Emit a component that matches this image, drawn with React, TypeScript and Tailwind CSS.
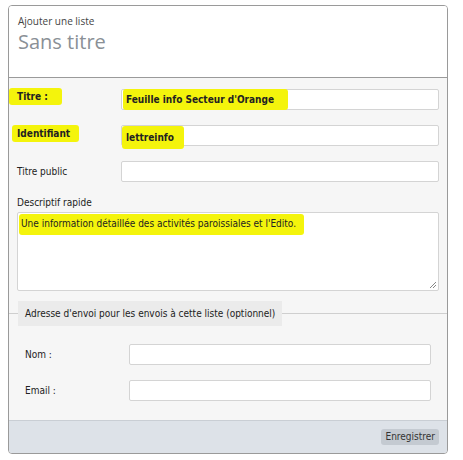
import React from 'react';

const Mark = ({ children, className = '' }: { children: React.ReactNode; className?: string }) => (
  <span className={`bg-[#f4f40c] rounded-[3px] ${className}`}>{children}</span>
);

function Row({ label, value, bold }: { label: React.ReactNode; value?: React.ReactNode; bold?: boolean }) {
  return (
    <div className="flex items-center h-[21px] mb-[15px]">
      <div className={`w-[104px] shrink-0 ${bold ? 'font-bold' : ''}`}>{label}</div>
      <div className="flex-1 h-[21px] bg-white border border-[#d4d4d4] rounded-[2px] flex items-center pl-[3px]">
        {value}
      </div>
    </div>
  );
}

export default function App() {
  return (
    <div className="w-[463px] h-[460px] bg-white pt-[5px] pl-[8px]" style={{ fontFamily: '"DejaVu Sans Condensed", "DejaVu Sans", sans-serif' }}>
      <div className="w-[440px] border border-[#9a9a9a] rounded-[4px] overflow-hidden text-[10px] text-[#222]">
        <div className="h-[72px] bg-white border-b border-[#9a9a9a] pl-[9px] pt-[8px]" style={{ fontFamily: '"Open Sans", sans-serif' }}>
          <div className="text-[10px] text-[#444] leading-[14px]">Ajouter une liste</div>
          <div className="text-[20px] text-[#8a9096] leading-[28px]">Sans titre</div>
        </div>
        <div className="bg-[#f6f6f6] px-[8px] pt-[11px]">
          <Row
            bold
            label={<Mark className="-ml-[8px] pl-[8px] pr-[14px] py-[3px] relative -top-[3px]">Titre :</Mark>}
            value={<Mark className="font-bold -ml-[2px] pl-[3px] pr-[14px] py-[3px]">Feuille info Secteur d'Orange</Mark>}
          />
          <Row
            bold
            label={<Mark className="-ml-[5px] pl-[5px] pr-[9px] py-[3px] relative -top-[2px]">Identifiant</Mark>}
            value={<Mark className="font-bold -ml-[3px] pl-[4px] pr-[10px] py-[4px] relative top-[2px]">lettreinfo</Mark>}
          />
          <Row label="Titre public" />
          <div className="leading-[12px] mt-[2px] mb-[3px]">Descriptif rapide</div>
          <div className="relative h-[79px] bg-white border border-[#d4d4d4] rounded-[2px] pt-[3px] pl-[1px]">
            <Mark className="pl-[2px] pr-[8px] pt-[4px] pb-[6px]">Une information détaillée des activités paroissiales et l'Edito.</Mark>
            <svg className="absolute right-[1px] bottom-[1px]" width="9" height="9" viewBox="0 0 9 9">
              <path d="M8 2 L2 8 M8 5 L5 8" stroke="#888" strokeWidth="1" />
            </svg>
          </div>
          <fieldset className="-mx-[8px] mt-[10px] border-t border-[#cfcfcf] px-[16px] pb-[19px]">
            <legend className="-ml-[7px] bg-[#ebebeb] px-[7px] h-[25px] leading-[25px]">
              Adresse d'envoi pour les envois à cette liste (optionnel)
            </legend>
            <div className="pt-[18px]">
              <Row label="Nom :" />
              <div className="flex items-center h-[21px]">
                <div className="w-[104px] shrink-0">Email :</div>
                <div className="flex-1 h-[21px] bg-white border border-[#d4d4d4] rounded-[2px]" />
              </div>
            </div>
          </fieldset>
        </div>
        <div className="h-[33px] bg-[#dde2e8] border-t border-[#c9ced4] flex items-center justify-end pr-[8px]">
          <button className="h-[16px] px-[4px] bg-[#c4cad1] rounded-[3px] text-[10px] text-[#333] leading-[16px]">Enregistrer</button>
        </div>
      </div>
    </div>
  );
}
